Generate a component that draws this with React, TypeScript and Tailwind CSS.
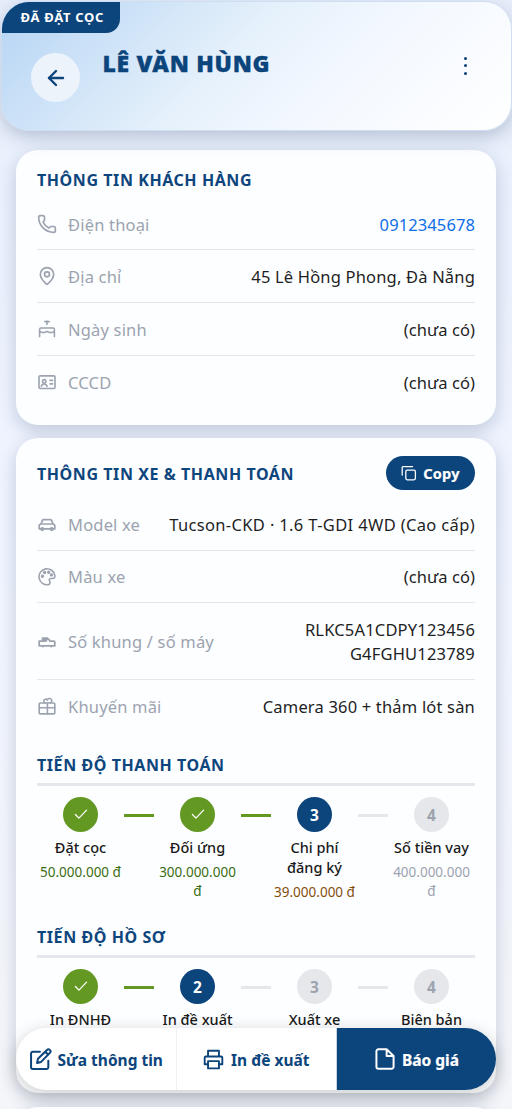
import React from "react";
import { ArrowLeft, Phone, MapPin } from "lucide-react";
import { clsx } from "clsx";

type StepState = "done" | "active" | "todo";

interface Step {
  label: React.ReactNode;
  amount?: string;
  state: StepState;
}

interface IconProps {
  children: React.ReactNode;
  size?: number;
  width?: number;
}

function Icon({ children, size = 20, width = 1.6 }: IconProps) {
  return (
    <svg
      width={size}
      height={size}
      viewBox="0 0 20 20"
      fill="none"
      stroke="currentColor"
      strokeWidth={width}
      strokeLinecap="round"
      strokeLinejoin="round"
      className="shrink-0"
    >
      {children}
    </svg>
  );
}

const CakeIcon = () => (
  <Icon width={1.6}>
    <path d="M2.6 17.6V10.4a1.4 1.4 0 0 1 1.4-1.4h12a1.4 1.4 0 0 1 1.4 1.4v7.2M2.6 12.6c1.8 0 2 1 3.7 1s2-1 3.7-1 2 1 3.7 1 2-1 3.7-1" />
    <path d="M10 5.4v-3.400M7.800 2.600h4.400" />
  </Icon>
);

const IdIcon = () => (
  <Icon width={1.6}>
    <rect x="2" y="3.9" width="16" height="12.6" rx="1.2" />
    <circle cx="7.2" cy="9.3" r="1.7" />
    <path d="M4.3 14.3c.4-1.5 1.5-2.3 2.9-2.3s2.5.8 2.9 2.3M13 8.4h2.500M13 11.900h2.500" />
  </Icon>
);

const CarIcon = () => (
  <Icon width={1.7}>
    <path d="m4 10 1.4-3.6a1.3 1.3 0 0 1 1.2-.8h6.8a1.3 1.3 0 0 1 1.2.8L16 10M4 10h12a1.8 1.8 0 0 1 1.8 1.8v3H2.2v-3A1.8 1.8 0 0 1 4 10z" />
    <circle cx="5.3" cy="15.1" r="1.2" />
    <circle cx="14.7" cy="15.1" r="1.2" />
  </Icon>
);

const PaletteIcon = () => (
  <Icon width={1.6}>
    <path d="M11.5 18.6A8 8 0 1 1 17.9 9.5c.2 1.900-.7 3-2.400 3h-1.700c-1.300 0-1.900 1.100-1.200 2.300.8 1.300.4 3.500-1.100 3.800z" />
    <circle cx="5.5" cy="10.2" r=".9" fill="currentColor" />
    <circle cx="7.6" cy="6.5" r=".9" fill="currentColor" />
    <circle cx="11.7" cy="6.3" r=".9" fill="currentColor" />
    <circle cx="14.4" cy="8.9" r=".9" fill="currentColor" />
  </Icon>
);

const EngineIcon = () => (
  <Icon width={1.8}>
    <path d="M2.2 14.800V10.200h6.600l1.600-2.600 1.800 1.200.8 1.400h3.800a1 1 0 0 1 1 1v3.600H2.200zM5.600 10V7.100h4.800M6.500 8.300h2.500" />
    <path d="M5.800 15v.6M14.200 15v.6" />
  </Icon>
);

const GiftIcon = () => (
  <Icon width={1.6}>
    <rect x="2.2" y="7" width="15.6" height="10.9" rx="1" />
    <path d="M2.2 11.700h15.600M10.400 7v10.900M7.600 6.800a2 2 0 0 1 .7-3.600c1.300-.3 2 .9 2 .9a2.300 2.300 0 1 1 3.300 2.700" />
  </Icon>
);

const CopyIcon = () => (
  <Icon size={16} width={1.6}>
    <path d="M1.500 12.500V3a1 1 0 0 1 1-1h12" />
    <rect x="6" y="6.500" width="12" height="12" rx="1.8" />
  </Icon>
);

const EditIcon = () => (
  <Icon size={23} width={1.75}>
    <path d="M9.5 3.2H3.3A1.5 1.5 0 0 0 1.8 4.7v12a1.5 1.5 0 0 0 1.5 1.5h12a1.5 1.5 0 0 0 1.5-1.5V11" />
    <path d="M7 13l.8-3.6L15.6 1.7a1.7 1.7 0 0 1 2.6 2.5L10.5 12.1 7 13zM14.2 3.3l2.4 2.4" />
  </Icon>
);

const PrintIcon = () => (
  <Icon size={21} width={1.8}>
    <path d="M4.8 7.2V1.6h10.4v5.600M4.800 14.500H1.600V8.400a1.200 1.200 0 0 1 1.200-1.200h14.400a1.200 1.200 0 0 1 1.200 1.200v6.100h-3.200" />
    <rect x="4.8" y="11.500" width="10.400" height="7" />
  </Icon>
);

const FileIcon = () => (
  <Icon size={22} width={1.8}>
    <path d="M11.500 1.200H4a1.800 1.800 0 0 0-1.800 1.800v14A1.800 1.800 0 0 0 4 18.800h12a1.800 1.800 0 0 0 1.800-1.800V7.200l-6.300-6zM11.500 1.200v6h6.300" />
  </Icon>
);

interface RowProps {
  icon: React.ReactNode;
  label: string;
  children: React.ReactNode;
  className?: string;
}

function Row({ icon, label, children, className }: RowProps) {
  return (
    <div
      className={clsx(
        "flex items-center justify-between border-[#e5e7eb] text-[16.5px] leading-6 tracking-[0.18px]",
        className
      )}
    >
      <div className="flex items-center gap-[11px] whitespace-nowrap text-[#9ca3af]">
        {icon}
        <span className="pt-[2px]">{label}</span>
      </div>
      <div className="whitespace-nowrap pt-[2px] text-right text-[#1f1f1f]">{children}</div>
    </div>
  );
}

const Empty = () => <span className="tracking-[0.06px]">(chưa có)</span>;

function SectionTitle({ children }: { children: React.ReactNode }) {
  return (
    <h2 className="whitespace-nowrap text-[16px] font-bold leading-6 tracking-[0.57px] text-[#0d457d]">{children}</h2>
  );
}

const circleStyles: Record<StepState, string> = {
  done: "bg-[#639922] text-white",
  active: "bg-[#0c447c] text-white",
  todo: "bg-[#e5e7eb] text-[#9ca3af]",
};

const amountStyles: Record<StepState, string> = {
  done: "text-[#3b6d11]",
  active: "text-[#854f0b]",
  todo: "text-[#9ca3af]",
};

function Stepper({ steps }: { steps: Step[] }) {
  return (
    <div className="flex items-start">
      {steps.map((step, i) => (
        <React.Fragment key={i}>
          {i > 0 && (
            <div
              className={clsx(
                "mt-[17.5px] h-[2.5px] w-[30px] shrink-0",
                steps[i - 1].state === "done" ? "bg-[#639922]" : "bg-[#e5e7eb]"
              )}
            />
          )}
          <div className="flex w-[87px] shrink-0 flex-col items-center text-center">
            <div
              className={clsx(
                "flex size-[35.5px] items-center justify-center rounded-full text-[15.5px] font-bold",
                circleStyles[step.state]
              )}
            >
              {step.state === "done" ? (
                <Icon size={18} width={1.4}>
                  <path d="m3.8 10.6 3.9 4L16.2 5.7" />
                </Icon>
              ) : (
                <span className="pt-[2px]">{i + 1}</span>
              )}
            </div>
            <div className="mt-[4.5px] whitespace-nowrap text-[14.5px] font-medium leading-[20.5px] text-[#1a1a1a]">
              {step.label}
            </div>
            {step.amount && (
              <div className={clsx("mt-[5.5px] text-[13.5px] leading-[19px]", amountStyles[step.state])}>
                {step.amount}
              </div>
            )}
          </div>
        </React.Fragment>
      ))}
    </div>
  );
}

const paymentSteps: Step[] = [
  { label: "Đặt cọc", amount: "50.000.000 đ", state: "done" },
  { label: "Đối ứng", amount: "300.000.000 đ", state: "done" },
  { label: <>Chi phí<br />đăng ký</>, amount: "39.000.000 đ", state: "active" },
  { label: "Số tiền vay", amount: "400.000.000 đ", state: "todo" },
];

const documentSteps: Step[] = [
  { label: "In ĐNHĐ", state: "done" },
  { label: "In đề xuất", state: "active" },
  { label: "Xuất xe", state: "todo" },
  { label: "Biên bản", state: "todo" },
];

const cardStyle = "mx-4 rounded-[22px] bg-[#fdfeff] px-[21px] shadow-[0_6px_18px_rgba(30,50,90,0.22)]";

export default function App() {
  return (
    <div className="relative flex h-[1109px] w-[512px] flex-col overflow-hidden bg-linear-to-b from-[#e8effc] via-[#f0f5ff] to-[#f5f6fa] font-['Noto_Sans',sans-serif]">
      {/* Header */}
      <header className="relative ml-[0.5px] mt-px flex h-[129.5px] w-[511px] shrink-0 items-start overflow-hidden rounded-[28px] border border-[#cfdff3] bg-[linear-gradient(135deg,#b5d4f4_0%,#e6f1fb_45%,#f3f8ff_65%,#ffffff_100%)] pl-[29.5px] pr-[37.5px] pt-[51px] shadow-[0_6px_18px_rgba(30,50,90,0.25)]">
        <span className="absolute -left-px -top-px flex h-8 w-[119.5px] items-center rounded-br-[14px] bg-[#0c447c] pl-5 pt-[2px] text-[13px] font-bold tracking-[0.7px] text-white">
          ĐÃ ĐẶT CỌC
        </span>
        <button className="flex size-[49px] shrink-0 items-center justify-center rounded-full bg-[#ecf3fb] text-[#0c447c]">
          <ArrowLeft size={24} strokeWidth={2.4} />
        </button>
        <h1 className="ml-[22.5px] -mt-[6px] whitespace-nowrap text-[23px] font-black leading-8 tracking-[0.7px] text-[#0c447c] [-webkit-text-stroke:0.3px_#0c447c]">
          LÊ VĂN HÙNG
        </h1>
        <button className="ml-auto mt-[1.5px] flex h-[22px] w-4 flex-col items-center justify-center gap-[4.5px]">
          <span className="size-[3px] rounded-full bg-[#0c447c]" />
          <span className="size-[3px] rounded-full bg-[#0c447c]" />
          <span className="size-[3px] rounded-full bg-[#0c447c]" />
        </button>
      </header>

      {/* Customer */}
      <section className={clsx(cardStyle, "mt-[19.5px] h-[275px] shrink-0 pt-[18px]")}>
        <SectionTitle>THÔNG TIN KHÁCH HÀNG</SectionTitle>
        <div className="mt-[6px]">
          <Row icon={<Phone size={20} strokeWidth={2} />} label="Điện thoại" className="h-[52px] border-b">
            <span className="tracking-[0.1px] text-[#0f6fe8]">0912345678</span>
          </Row>
          <Row icon={<MapPin size={20} strokeWidth={2} />} label="Địa chỉ" className="h-[53px] border-b">
            45 Lê Hồng Phong, Đà Nẵng
          </Row>
          <Row icon={<CakeIcon />} label="Ngày sinh" className="h-[52.5px] border-b">
            <Empty />
          </Row>
          <Row icon={<IdIcon />} label="CCCD" className="h-[52px]">
            <Empty />
          </Row>
        </div>
      </section>

      {/* Vehicle and payment */}
      <section className={clsx(cardStyle, "mt-[13px] h-[655px] shrink-0 pt-[18px]")}>
        <div className="flex h-[34px] items-center justify-between">
          <div className="pt-[2px]">
            <SectionTitle>THÔNG TIN XE & THANH TOÁN</SectionTitle>
          </div>
          <button className="flex h-[34px] w-[89px] items-center justify-center gap-[6px] rounded-full bg-[#0c447c] text-[14.5px] font-bold text-white">
            <CopyIcon />
            <span className="pt-[2px] tracking-[0.2px] [-webkit-text-stroke:0.2px_#ffffff]">Copy</span>
          </button>
        </div>
        <div className="mt-[8px]">
          <Row icon={<CarIcon />} label="Model xe" className="h-[52.5px] border-b">
            <span className="tracking-[0.35px]">Tucson-CKD · 1.6 T-GDI 4WD (Cao cấp)</span>
          </Row>
          <Row icon={<PaletteIcon />} label="Màu xe" className="h-[52.5px] border-b">
            <Empty />
          </Row>
          <Row icon={<EngineIcon />} label="Số khung / số máy" className="h-[76.5px] border-b">
            RLKC5A1CDPY123456
            <br />
            G4FGHU123789
          </Row>
          <Row icon={<GiftIcon />} label="Khuyến mãi" className="h-[53px]">
            Camera 360 + thảm lót sàn
          </Row>
        </div>
        <div className="mt-5 h-[33px] border-b-3 border-[#e4e7eb]">
          <SectionTitle>TIẾN ĐỘ THANH TOÁN</SectionTitle>
        </div>
        <div className="h-[139px] pt-[11px]">
          <Stepper steps={paymentSteps} />
        </div>
        <div className="h-[33px] border-b-3 border-[#e4e7eb]">
          <SectionTitle>TIẾN ĐỘ HỒ SƠ</SectionTitle>
        </div>
        <div className="pt-[11px]">
          <Stepper steps={documentSteps} />
        </div>
      </section>
      <section className={clsx(cardStyle, "mt-[14px] h-20 shrink-0")} />

      {/* Floating action bar */}
      <nav className="absolute bottom-[19px] left-4 flex h-[62px] w-[480px] overflow-hidden rounded-[31px] bg-white text-[15.5px] font-bold text-[#0c447c] shadow-[0_4px_18px_rgba(0,0,0,0.2)]">
        <button className="flex w-[160.5px] items-center justify-center gap-[6px] whitespace-nowrap border-r border-[#edf0f4]">
          <EditIcon />
          <span className="pt-[3px]">Sửa thông tin</span>
        </button>
        <button className="flex w-[160.5px] items-center justify-center gap-[7px] whitespace-nowrap border-r border-[#c5d3e2]">
          <PrintIcon />
          <span className="pt-[3px]">In đề xuất</span>
        </button>
        <button className="flex flex-1 items-center justify-center gap-[6px] whitespace-nowrap bg-[#0c447c] text-white">
          <FileIcon />
          <span className="pt-[3px] [-webkit-text-stroke:0.2px_#ffffff]">Báo giá</span>
        </button>
      </nav>
    </div>
  );
}
